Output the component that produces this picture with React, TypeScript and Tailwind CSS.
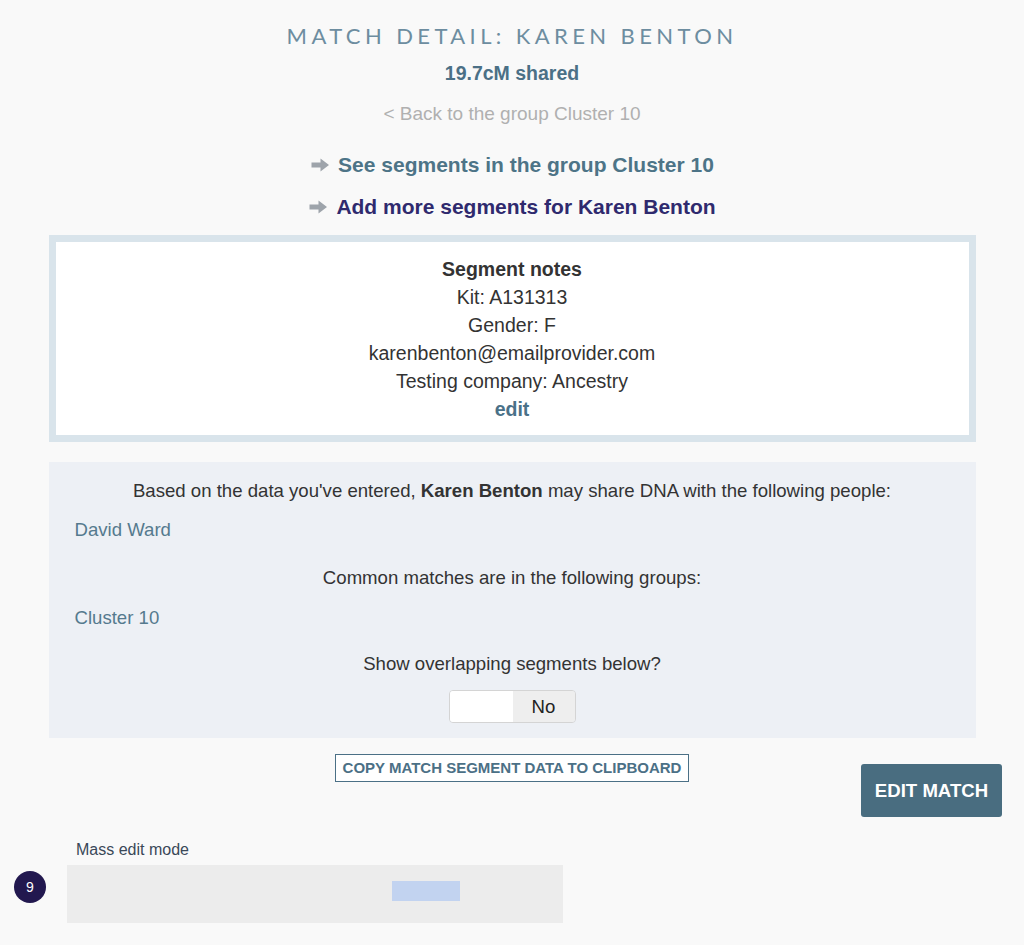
import React from "react";

function Arrow() {
  return (
    <svg width="21" height="16" viewBox="0 0 20 16" className="inline-block mr-[7px] align-[-1px]">
      <path d="M1 5.5 H10 V1.5 L18.5 8 L10 14.5 V10.5 H1 Z" fill="#9ea4ab" />
    </svg>
  );
}

export default function App() {
  return (
    <div className="min-h-[945px] bg-[#f9f9f9] font-['Liberation_Sans',Arial,sans-serif] text-[#333]">
      <div className="w-[927px] mx-auto flex flex-col items-center">
        <h1 className="mt-[22px] text-[22px] leading-[28px] tracking-[0.2em] text-[#6d8da0] font-['Lato',sans-serif] font-normal">
          MATCH DETAIL: KAREN BENTON
        </h1>
        <div className="mt-[11px] text-[19.5px] leading-[24px] font-bold text-[#4b7086]">19.7cM shared</div>
        <div className="mt-[17px] text-[19px] leading-[24px] text-[#b0b0b0]">&lt; Back to the group Cluster 10</div>
        <div className="mt-[25px] text-[21px] leading-[28px] font-bold text-[#4d7487]">
          <Arrow />
          See segments in the group Cluster 10
        </div>
        <div className="mt-[14px] text-[21px] leading-[28px] font-bold text-[#2f2a6e]">
          <Arrow />
          Add more segments for Karen Benton
        </div>

        <div className="mt-[14px] w-full border-[7px] border-[#d9e4eb] bg-white pt-[13px] pb-[12px] text-center text-[19.5px] leading-[28px] text-[#333]">
          <div className="font-bold">Segment notes</div>
          <div>Kit: A131313</div>
          <div>Gender: F</div>
          <div>karenbenton@emailprovider.com</div>
          <div>Testing company: Ancestry</div>
          <div className="font-bold text-[#4a7188]">edit</div>
        </div>

        <div className="mt-[20px] w-full h-[276px] bg-[#edf0f5] pt-[17px] px-[26px] text-[18.6px] leading-[24px]">
          <div className="text-center">
            Based on the data you've entered, <b>Karen Benton</b> may share DNA with the following people:
          </div>
          <div className="mt-[15px] text-[#557a8e]">David Ward</div>
          <div className="mt-[24px] text-center">Common matches are in the following groups:</div>
          <div className="mt-[16px] text-[#557a8e]">Cluster 10</div>
          <div className="mt-[22px] text-center">Show overlapping segments below?</div>
          <div className="mt-[14px] flex justify-center">
            <div className="flex w-[127px] h-[33px] rounded-[4px] border border-[#d4d4d4] overflow-hidden">
              <div className="w-[63px] bg-white"></div>
              <div className="flex-1 bg-[#eeeeee] flex items-center justify-center text-[18.6px] text-[#222]">No</div>
            </div>
          </div>
        </div>
      </div>

      <div className="grid grid-cols-[1fr_auto_1fr] px-[22px] mt-[16px]">
        <div></div>
        <div className="h-[28px] px-[7px] border border-[#4b7086] flex items-center text-[15px] font-bold text-[#4b7086] bg-white">
          COPY MATCH SEGMENT DATA TO CLIPBOARD
        </div>
        <div className="flex justify-end">
          <div className="mt-[10px] w-[141px] h-[53px] rounded-[3px] bg-[#496d80] text-white text-[18.6px] font-bold flex items-center justify-center">
            EDIT MATCH
          </div>
        </div>
      </div>

      <div className="flex items-start pl-[14px] mt-[24px]">
        <div className="mt-[30px] w-[32px] h-[32px] rounded-full bg-[#22184f] text-white text-[14px] flex items-center justify-center">
          9
        </div>
        <div className="ml-[21px] w-[496px]">
          <div className="pl-[9px] text-[16px] leading-[18px] text-[#3a4858]">Mass edit mode</div>
          <div className="mt-[6px] h-[58px] bg-[#ececec] pl-[325px] pt-[16px]">
            <div className="w-[68px] h-[20px] bg-[#c2d3f0]"></div>
          </div>
        </div>
      </div>
    </div>
  );
}
